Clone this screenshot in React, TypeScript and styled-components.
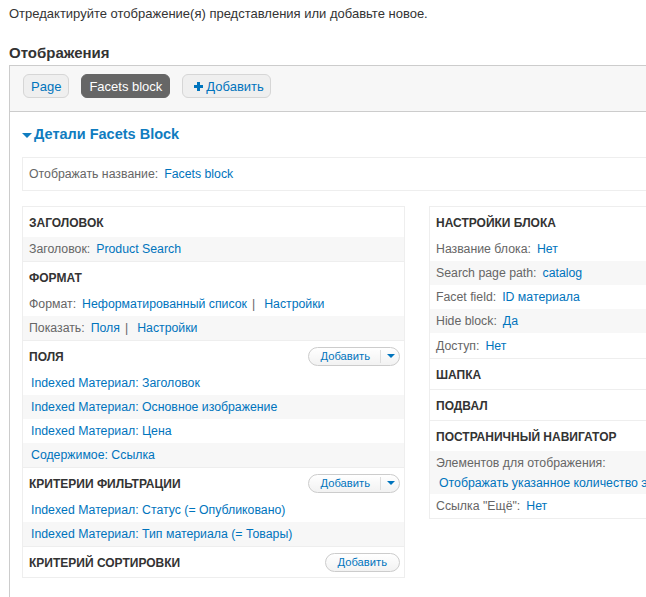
import React from 'react';
import styled, { createGlobalStyle } from 'styled-components';

const Global = createGlobalStyle`
  html, body { margin: 0; padding: 0; overflow: hidden; background: #fff; }
  body { font-family: "Liberation Sans", Arial, sans-serif; color: #333; }
  * { box-sizing: border-box; }
`;

const PageWrap = styled.div`
  width: 860px;
  padding-left: 9px;
`;

const Intro = styled.p`
  margin: 0;
  padding-top: 5px;
  font-size: 13px;
  line-height: 18px;
  color: #333;
`;

const Heading = styled.h2`
  margin: 20px 0 2px;
  font-size: 15px;
  line-height: 20px;
  font-weight: bold;
  color: #333;
`;

const Panel = styled.div`
  border-left: 1px solid #ccc;
  border-top: 1px solid #ccc;
  min-height: 540px;
`;

const TopBar = styled.div`
  display: flex;
  gap: 12px;
  background: #f7f7f7;
  border-bottom: 1px solid #ccc;
  padding: 8px 13px 13px;
`;

const TabButton = styled.span<{ $active?: boolean; $icon?: boolean }>`
  display: inline-flex;
  align-items: center;
  gap: 3px;
  height: 24px;
  padding: 0 ${(p) => (p.$icon ? 6 : 7)}px 0 ${(p) => (p.$icon ? 11 : 7)}px;
  border-radius: 6px;
  font-size: 13px;
  border: 1px solid ${(p) => (p.$active ? '#666' : '#d6d6d6')};
  background: ${(p) => (p.$active ? '#666' : '#efefef')};
  color: ${(p) => (p.$active ? '#fff' : '#0074bd')};
`;

const PanelBody = styled.div`
  padding: 12px 0 0 12px;
`;

const DetailsTitle = styled.h3`
  margin: 0;
  display: flex;
  align-items: center;
  gap: 2px;
  font-size: 14.5px;
  line-height: 20px;
  font-weight: bold;
  color: #0f7cc0;
`;

const Caret = styled.span`
  display: inline-block;
  width: 0;
  height: 0;
  border-left: 5px solid transparent;
  border-right: 5px solid transparent;
  border-top: 5px solid #0f7cc0;
  margin-top: 2px;
`;

const NameBox = styled.div`
  margin-top: 13px;
  height: 34px;
  border: 1px solid #eee;
  padding-left: 6px;
  display: flex;
  align-items: center;
  font-size: 12.3px;
`;

const Columns = styled.div`
  display: flex;
  gap: 24px;
  margin-top: 15px;
  align-items: flex-start;
`;

const Column = styled.div`
  width: 383px;
  border: 1px solid #eee;
`;

const Section = styled.div`
  border-bottom: 1px solid #eee;
  &:last-child { border-bottom: none; }
`;

const SectionHead = styled.div`
  height: 30px;
  display: flex;
  align-items: center;
  justify-content: space-between;
  padding: 0 4px 0 6px;
`;

const SectionTitle = styled.span`
  margin-top: 2px;
  line-height: 16px;
  font-size: 12px;
  font-weight: bold;
  text-transform: uppercase;
  color: #333;
`;

const Row = styled.div<{ $alt?: boolean; $indent?: number; $extra?: boolean }>`
  min-height: 24px;
  line-height: 24px;
  font-size: 12.3px;
  padding-left: ${(p) => p.$indent ?? 6}px;
  padding-top: ${(p) => (p.$extra ? 1 : 0)}px;
  background: ${(p) => (p.$alt ? '#f7f7f7' : '#fff')};
  white-space: nowrap;
`;

const StackRow = styled.div<{ $alt?: boolean }>`
  padding: 2px 0 1px 6px;
  line-height: 20px;
  font-size: 12.3px;
  background: ${(p) => (p.$alt ? '#f7f7f7' : '#fff')};
  white-space: nowrap;
  overflow: hidden;
`;

const Label = styled.span`
  color: #666;
  margin-right: 6px;
`;

const Link = styled.a`
  color: #0074bd;
  text-decoration: none;
`;

const Sep = styled.span`
  color: #666;
  margin: 0 9px 0 5px;
`;

const BlockLink = styled(Link)`
  display: block;
  padding-left: 3px;
`;

const Pill = styled.span`
  display: inline-flex;
  align-items: center;
  height: 19px;
  border: 1px solid #ccc;
  border-radius: 10px;
  background: linear-gradient(#fff, #f2f2f2);
  font-size: 11.2px;
  color: #0074bd;
  overflow: hidden;
`;

const PillText = styled.span<{ $wide?: boolean }>`
  padding: 0 ${(p) => (p.$wide ? 12 : 10)}px 0 12px;
`;

const PillArrow = styled.span`
  display: flex;
  align-items: center;
  justify-content: center;
  height: 13px;
  width: 19px;
  border-left: 1px solid #ddd;
  &::after {
    content: '';
    border-left: 4px solid transparent;
    border-right: 4px solid transparent;
    border-top: 4px solid #0074bd;
    margin-left: 1px;
  }
`;

const PlusIcon = () => (
  <svg width="9" height="9" viewBox="0 0 9 9" aria-hidden="true">
    <path d="M4.5 0v9M0 4.5h9" stroke="#0074bd" strokeWidth="3" />
  </svg>
);

const AddButton = ({ dropdown }: { dropdown?: boolean }) => (
  <Pill>
    <PillText $wide={!dropdown}>Добавить</PillText>
    {dropdown && <PillArrow />}
  </Pill>
);

type Item = { label: string; value: string; alt?: boolean; extra?: boolean };

const Fields = [
  'Indexed Материал: Заголовок',
  'Indexed Материал: Основное изображение',
  'Indexed Материал: Цена',
  'Содержимое: Ссылка',
];

const Filters = [
  'Indexed Материал: Статус (= Опубликовано)',
  'Indexed Материал: Тип материала (= Товары)',
];

const BlockSettings: Item[] = [
  { label: 'Название блока:', value: 'Нет' },
  { label: 'Search page path:', value: 'catalog', alt: true },
  { label: 'Facet field:', value: 'ID материала' },
  { label: 'Hide block:', value: 'Да', alt: true },
  { label: 'Доступ:', value: 'Нет', extra: true },
];

export default function App() {
  return (
    <PageWrap>
      <Global />
      <Intro>Отредактируйте отображение(я) представления или добавьте новое.</Intro>
      <Heading>Отображения</Heading>
      <Panel>
        <TopBar>
          <TabButton>Page</TabButton>
          <TabButton $active>Facets block</TabButton>
          <TabButton $icon>
            <PlusIcon />
            Добавить
          </TabButton>
        </TopBar>
        <PanelBody>
          <DetailsTitle>
            <Caret />
            Детали Facets Block
          </DetailsTitle>
          <NameBox>
            <Label>Отображать название:</Label>
            <Link>Facets block</Link>
          </NameBox>
          <Columns>
            <Column>
              <Section>
                <SectionHead>
                  <SectionTitle>Заголовок</SectionTitle>
                </SectionHead>
                <Row $alt>
                  <Label>Заголовок:</Label>
                  <Link>Product Search</Link>
                </Row>
              </Section>
              <Section>
                <SectionHead>
                  <SectionTitle>Формат</SectionTitle>
                </SectionHead>
                <Row>
                  <Label>Формат:</Label>
                  <Link>Неформатированный список</Link>
                  <Sep>|</Sep>
                  <Link>Настройки</Link>
                </Row>
                <Row $alt>
                  <Label>Показать:</Label>
                  <Link>Поля</Link>
                  <Sep>|</Sep>
                  <Link>Настройки</Link>
                </Row>
              </Section>
              <Section>
                <SectionHead>
                  <SectionTitle>Поля</SectionTitle>
                  <AddButton dropdown />
                </SectionHead>
                {Fields.map((f, i) => (
                  <Row key={f} $alt={i % 2 === 1} $indent={8}>
                    <Link>{f}</Link>
                  </Row>
                ))}
              </Section>
              <Section>
                <SectionHead>
                  <SectionTitle>Критерии фильтрации</SectionTitle>
                  <AddButton dropdown />
                </SectionHead>
                {Filters.map((f, i) => (
                  <Row key={f} $alt={i % 2 === 1} $indent={8}>
                    <Link>{f}</Link>
                  </Row>
                ))}
              </Section>
              <Section>
                <SectionHead>
                  <SectionTitle>Критерий сортировки</SectionTitle>
                  <AddButton />
                </SectionHead>
              </Section>
            </Column>
            <Column>
              <Section>
                <SectionHead>
                  <SectionTitle>Настройки блока</SectionTitle>
                </SectionHead>
                {BlockSettings.map((s) => (
                  <Row key={s.label} $alt={s.alt} $extra={s.extra}>
                    <Label>{s.label}</Label>
                    <Link>{s.value}</Link>
                  </Row>
                ))}
              </Section>
              <Section>
                <SectionHead>
                  <SectionTitle>Шапка</SectionTitle>
                </SectionHead>
              </Section>
              <Section>
                <SectionHead>
                  <SectionTitle>Подвал</SectionTitle>
                </SectionHead>
              </Section>
              <Section>
                <SectionHead>
                  <SectionTitle>Постраничный навигатор</SectionTitle>
                </SectionHead>
                <StackRow $alt>
                  <Label>Элементов для отображения:</Label>
                  <BlockLink>Отображать указанное количество элементов</BlockLink>
                </StackRow>
                <Row>
                  <Label>Ссылка "Ещё":</Label>
                  <Link>Нет</Link>
                </Row>
              </Section>
            </Column>
          </Columns>
        </PanelBody>
      </Panel>
    </PageWrap>
  );
}
